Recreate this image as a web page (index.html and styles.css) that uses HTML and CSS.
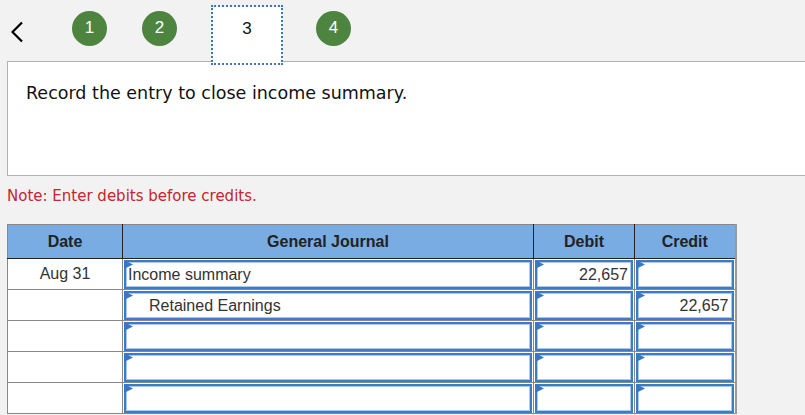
FILE: index.html
```html
<!DOCTYPE html>
<html>
<head>
<meta charset="utf-8">
<link rel="stylesheet" href="styles.css">
</head>
<body>
<nav class="steps">
  <svg class="back" width="14" height="22" viewBox="0 0 14 22"><polyline points="12,1.5 2.5,11 12,20.5" fill="none" stroke="#000" stroke-width="2.2"/></svg>
  <span class="step done s1">1</span>
  <span class="step done s2">2</span>
  <span class="step current">3</span>
  <span class="step done s4">4</span>
</nav>
<section class="question">
  <p>Record the entry to close income summary.</p>
</section>
<p class="note">Note: Enter debits before credits.</p>
<table class="journal">
  <colgroup>
    <col class="c-date"><col class="c-desc"><col class="c-num"><col class="c-num2">
  </colgroup>
  <thead>
    <tr><th>Date</th><th>General Journal</th><th>Debit</th><th>Credit</th></tr>
  </thead>
  <tbody>
    <tr>
      <td class="date">Aug 31</td>
      <td><div class="field"><i class="tri"></i>Income summary</div></td>
      <td><div class="field num"><i class="tri"></i>22,657</div></td>
      <td><div class="field num"><i class="tri"></i></div></td>
    </tr>
    <tr>
      <td class="date"></td>
      <td><div class="field indent"><i class="tri"></i>Retained Earnings</div></td>
      <td><div class="field num"><i class="tri"></i></div></td>
      <td><div class="field num"><i class="tri"></i>22,657</div></td>
    </tr>
    <tr>
      <td class="date"></td>
      <td><div class="field"><i class="tri"></i></div></td>
      <td><div class="field num"><i class="tri"></i></div></td>
      <td><div class="field num"><i class="tri"></i></div></td>
    </tr>
    <tr>
      <td class="date"></td>
      <td><div class="field"><i class="tri"></i></div></td>
      <td><div class="field num"><i class="tri"></i></div></td>
      <td><div class="field num"><i class="tri"></i></div></td>
    </tr>
    <tr>
      <td class="date"></td>
      <td><div class="field"><i class="tri"></i></div></td>
      <td><div class="field num"><i class="tri"></i></div></td>
      <td><div class="field num"><i class="tri"></i></div></td>
    </tr>
  </tbody>
</table>
</body>
</html>
```
FILE: styles.css
```css
html, body {
  margin: 0;
  padding: 0;
  background: #f2f2f2;
  overflow: hidden;
}
body {
  width: 805px;
  height: 415px;
  font-family: "Liberation Sans", Arial, sans-serif;
}
.steps {
  display: flex;
  align-items: center;
  height: 63px;
  padding-left: 10px;
  box-sizing: border-box;
}
.back {
  margin-right: 48px;
}
.step {
  display: flex;
  align-items: center;
  justify-content: center;
  font-size: 17px;
}
.step.done {
  width: 35px;
  height: 35px;
  border-radius: 50%;
  background: #4d843f;
  color: #fff;
  margin-top: -7px;
}
.s2 { margin-left: 35px; }
.current {
  width: 68px;
  margin-left: 36px;
  margin-top: 6px;
  background: #fff;
  outline: 2px dotted #3a78c6;
  color: #111;
  align-items: flex-start;
  padding-top: 12px;
  box-sizing: border-box;
  position: relative;
  z-index: 2;
  height: 56px;
}
.s4 { margin-left: 35px; }
.question {
  margin: -2px 0 0 7px;
  height: 115px;
  background: #fff;
  border: 1px solid #b3b3b3;
  border-right: none;
  box-sizing: border-box;
  position: relative;
  z-index: 1;
}
.question p {
  margin: 0;
  padding: 21px 0 0 18px;
  font-family: "DejaVu Sans", Verdana, sans-serif;
  font-size: 17.5px;
  color: #111;
}
.note {
  margin: 11px 0 0 7px;
  font-family: "DejaVu Sans", Verdana, sans-serif;
  font-size: 15px;
  color: #c3262e;
  height: 18px;
}
.journal {
  margin: 19px 0 0 7px;
  border-collapse: collapse;
  table-layout: fixed;
  width: 728px;
  border-top: 1px solid #888;
  border-left: 1px solid #888;
  border-right: 2px solid #999;
}
.c-date { width: 115px; }
.c-desc { width: 411px; }
.c-num { width: 101px; }
.c-num2 { width: 101px; }
.journal th {
  height: 33px;
  padding: 0;
  background: #79ace3;
  font-size: 16px;
  font-weight: bold;
  color: #222;
  border-right: 1px solid #222;
  border-bottom: 1px solid #222;
  text-align: center;
}
.journal td {
  height: 31px;
  padding: 1px 1px 0 1px;
  background: #fff;
  border: 1px solid #888;
  box-sizing: border-box;
}
.journal td.date {
  text-align: center;
  font-size: 16px;
  color: #333;
  padding: 0;
}
.field {
  position: relative;
  height: 29px;
  box-sizing: border-box;
  border: 2px solid #3f7bc3;
  box-shadow: inset 0 0 0 1px #a9c8ee;
  background: #fff;
  font-size: 16px;
  color: #333;
  line-height: 25px;
  padding: 0 3px 0 2px;
  white-space: nowrap;
}
.field.indent { padding-left: 23px; }
.field.num { text-align: right; }
.tri {
  display: block;
  position: absolute;
  left: -2px;
  top: -2px;
  width: 9px;
  height: 9px;
  background: #3a76c2;
  clip-path: polygon(0 0, 100% 50%, 0 100%);
  z-index: 1;
}
```
